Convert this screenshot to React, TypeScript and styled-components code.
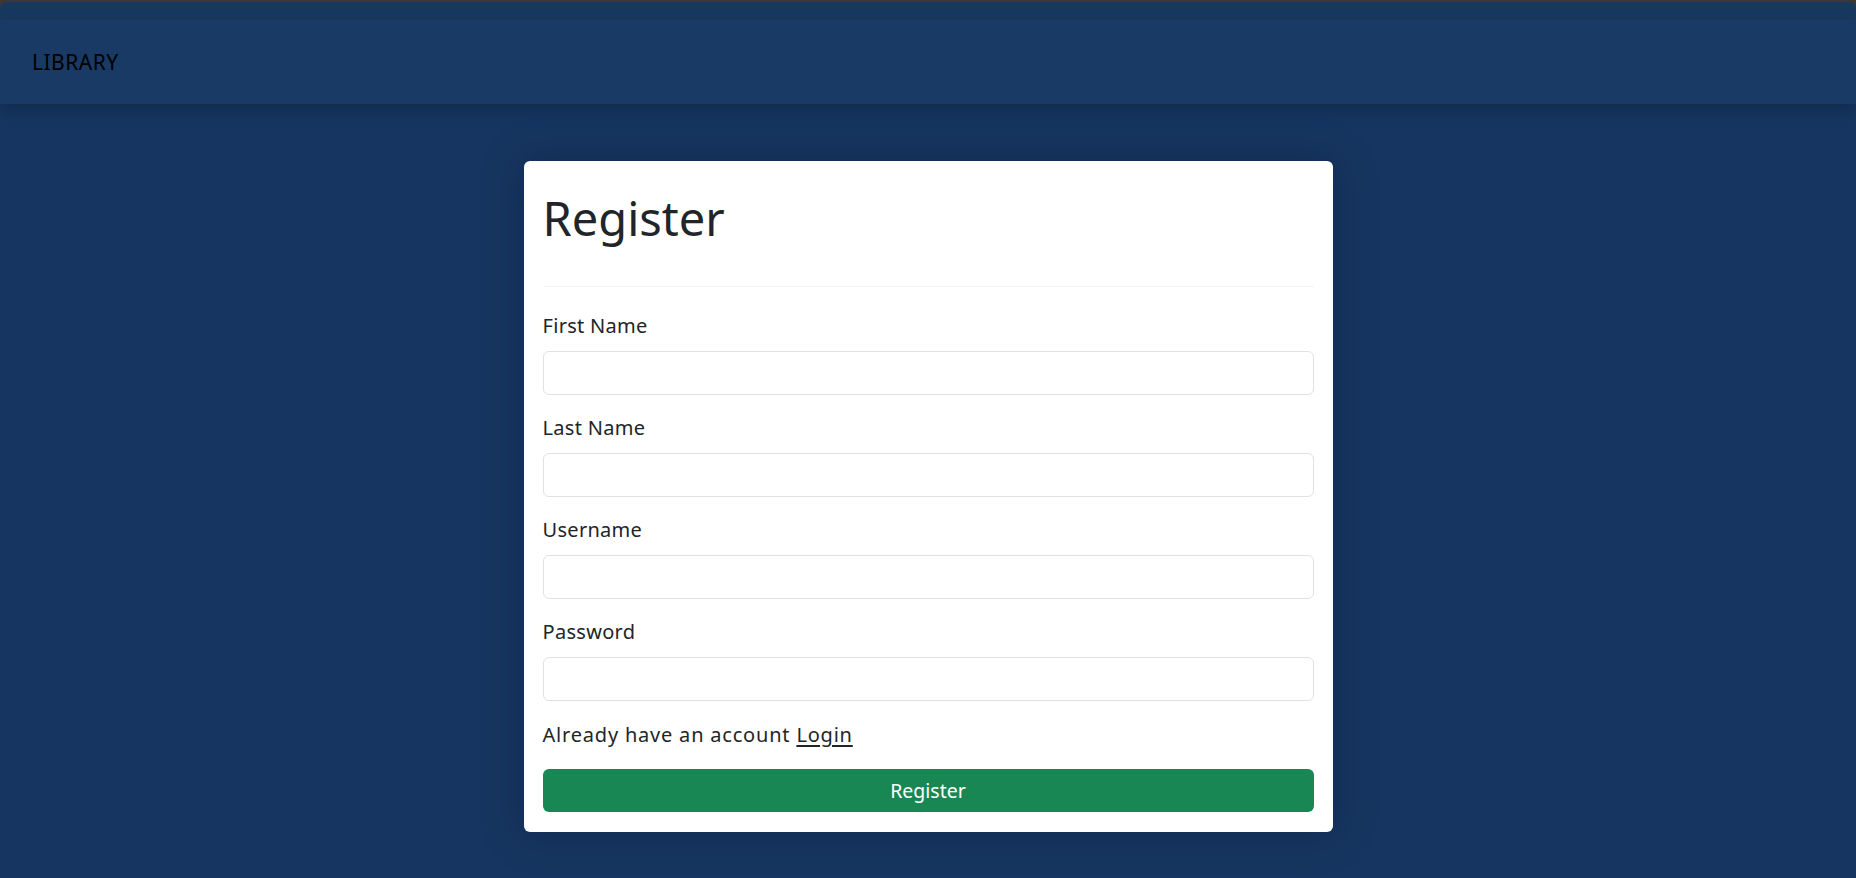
import React from "react";
import styled, { createGlobalStyle } from "styled-components";

const GlobalStyle = createGlobalStyle`
  html, body {
    margin: 0;
    padding: 0;
    background: #3a3734;
  }
  * { box-sizing: border-box; }
  body {
    font-family: "Noto Sans", "Open Sans", sans-serif;
    color: #212529;
  }
`;

const Page = styled.div`
  margin-top: 2px;
  min-height: calc(100vh - 2px);
  background: #163661;
  border-radius: 8px 8px 0 0;
  overflow: hidden;
  display: flex;
  flex-direction: column;
`;

const TopBand = styled.div`
  height: 18px;
  background: #18395f;
  border-bottom: 1px solid #1a3b63;
`;

const NavBar = styled.nav`
  height: 84px;
  background: #193a65;
  display: flex;
  align-items: center;
  padding-left: 32px;
  box-shadow: 0 6px 14px rgba(8, 22, 44, 0.35);
  position: relative;
  z-index: 1;
`;

const Brand = styled.span`
  font-family: "Noto Sans", sans-serif;
  font-size: 21px;
  color: #000;
  letter-spacing: 0.5px;
`;

const Main = styled.main`
  display: flex;
  justify-content: center;
  padding-top: 57px;
  padding-bottom: 40px;
`;

const Card = styled.div`
  width: 809px;
  background: #fff;
  border-radius: 6px;
  padding: 0 19px 20px;
  box-shadow: 0 0 40px rgba(5, 20, 45, 0.35);
`;

const Header = styled.div`
  padding-top: 29px;
  padding-bottom: 38px;
  border-bottom: 1px solid #f4f4f6;
`;

const Title = styled.h1`
  margin: 0;
  font-size: 47px;
  font-weight: 400;
  line-height: 57.6px;
  color: #212529;
`;

const Form = styled.form`
  display: flex;
  flex-direction: column;
  padding-top: 24px;
`;

const Field = styled.div`
  display: flex;
  flex-direction: column;
  margin-bottom: 18px;
`;

const Label = styled.label`
  font-size: 20px;
  line-height: 30px;
  letter-spacing: 0.3px;
  margin-bottom: 10px;
  color: #212529;
`;

const Input = styled.input`
  height: 44px;
  border: 1px solid #dee2e6;
  border-radius: 6px;
  background: #fff;
  padding: 0 12px;
  font-size: 18px;
  font-family: inherit;
  outline: none;
`;

const Note = styled.p`
  margin: 1px 0 19px;
  font-size: 20px;
  line-height: 30px;
  letter-spacing: 0.8px;
  color: #212529;
`;

const LoginLink = styled.a`
  color: #212529;
  text-decoration: underline;
  text-underline-offset: 3px;
`;

const Button = styled.button`
  height: 43px;
  border: none;
  border-radius: 6px;
  background: #198754;
  color: #fff;
  font-family: "Noto Sans", sans-serif;
  font-size: 19.5px;
  cursor: pointer;
`;

const fields = ["First Name", "Last Name", "Username", "Password"];

export default function App() {
  return (
    <>
      <GlobalStyle />
      <Page>
        <TopBand />
        <NavBar>
          <Brand>LIBRARY</Brand>
        </NavBar>
        <Main>
          <Card>
            <Header>
              <Title>Register</Title>
            </Header>
            <Form onSubmit={(e) => e.preventDefault()}>
              {fields.map((f) => (
                <Field key={f}>
                  <Label>{f}</Label>
                  <Input type={f === "Password" ? "password" : "text"} />
                </Field>
              ))}
              <Note>
                Already have an account <LoginLink href="#">Login</LoginLink>
              </Note>
              <Button type="submit">Register</Button>
            </Form>
          </Card>
        </Main>
      </Page>
    </>
  );
}
